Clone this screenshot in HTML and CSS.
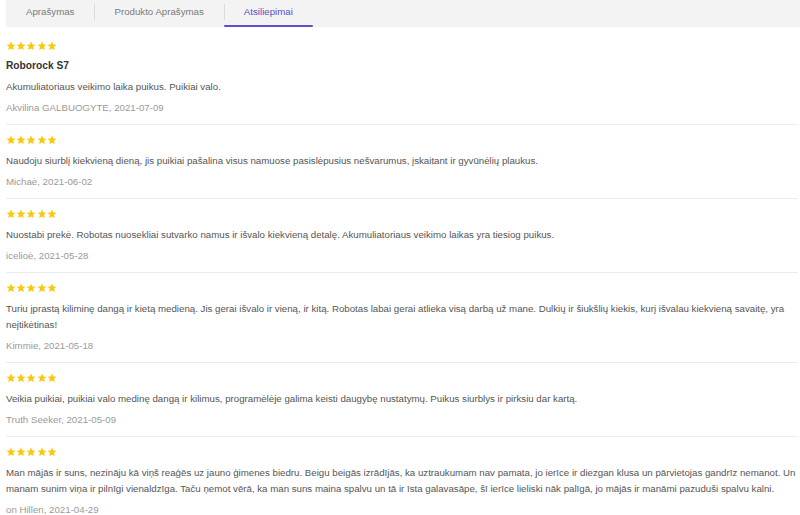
FILE: index.html
```html
<!DOCTYPE html>
<html lang="lt">
<head>
<meta charset="utf-8">
<title>Atsiliepimai</title>
<link rel="stylesheet" href="styles.css">
</head>
<body>
<svg width="0" height="0" class="defs" aria-hidden="true">
  <defs>
    <symbol id="star" viewBox="0 0 24 24">
      <path d="M12 1.2l3.2 7 7.6.7-5.8 5.1 1.8 7.6L12 17.7l-6.8 3.9 1.8-7.6-5.8-5.1 7.6-.7z"/>
    </symbol>
  </defs>
</svg>
<div class="page">
  <nav class="tabs">
    <div class="tab">Aprašymas</div>
    <div class="tab sep">Produkto Aprašymas</div>
    <div class="tab sep active">Atsiliepimai</div>
  </nav>
  <div class="reviews">
    <div class="review">
      <div class="stars"><svg><use href="#star"/></svg><svg><use href="#star"/></svg><svg><use href="#star"/></svg><svg><use href="#star"/></svg><svg><use href="#star"/></svg></div>
      <div class="title">Roborock S7</div>
      <p class="text">Akumuliatoriaus veikimo laika puikus. Puikiai valo.</p>
      <p class="author">Akvilina GALBUOGYTE, 2021-07-09</p>
    </div>
    <div class="review">
      <div class="stars"><svg><use href="#star"/></svg><svg><use href="#star"/></svg><svg><use href="#star"/></svg><svg><use href="#star"/></svg><svg><use href="#star"/></svg></div>
      <p class="text">Naudoju siurblį kiekvieną dieną, jis puikiai pašalina visus namuose pasislėpusius nešvarumus, įskaitant ir gyvūnėlių plaukus.</p>
      <p class="author">Michaė, 2021-06-02</p>
    </div>
    <div class="review">
      <div class="stars"><svg><use href="#star"/></svg><svg><use href="#star"/></svg><svg><use href="#star"/></svg><svg><use href="#star"/></svg><svg><use href="#star"/></svg></div>
      <p class="text">Nuostabi prekė. Robotas nuosekliai sutvarko namus ir išvalo kiekvieną detalę. Akumuliatoriaus veikimo laikas yra tiesiog puikus.</p>
      <p class="author">icelioė, 2021-05-28</p>
    </div>
    <div class="review">
      <div class="stars"><svg><use href="#star"/></svg><svg><use href="#star"/></svg><svg><use href="#star"/></svg><svg><use href="#star"/></svg><svg><use href="#star"/></svg></div>
      <p class="text">Turiu įprastą kiliminę dangą ir kietą medieną. Jis gerai išvalo ir vieną, ir kitą. Robotas labai gerai atlieka visą darbą už mane. Dulkių ir šiukšlių kiekis, kurį išvalau kiekvieną savaitę, yra neįtikėtinas!</p>
      <p class="author">Kimmie, 2021-05-18</p>
    </div>
    <div class="review">
      <div class="stars"><svg><use href="#star"/></svg><svg><use href="#star"/></svg><svg><use href="#star"/></svg><svg><use href="#star"/></svg><svg><use href="#star"/></svg></div>
      <p class="text">Veikia puikiai, puikiai valo medinę dangą ir kilimus, programėlėje galima keisti daugybę nustatymų. Puikus siurblys ir pirksiu dar kartą.</p>
      <p class="author">Truth Seeker, 2021-05-09</p>
    </div>
    <div class="review">
      <div class="stars"><svg><use href="#star"/></svg><svg><use href="#star"/></svg><svg><use href="#star"/></svg><svg><use href="#star"/></svg><svg><use href="#star"/></svg></div>
      <p class="text">Man mājās ir suns, nezināju kā viņš reaģēs uz jauno ģimenes biedru. Beigu beigās izrādījās, ka uztraukumam nav pamata, jo ierīce ir diezgan klusa un pārvietojas gandrīz nemanot. Un manam sunim viņa ir pilnīgi vienaldzīga. Taču ņemot vērā, ka man suns maina spalvu un tā ir īsta galavasāpe, šī ierīce lieliski nāk palīgā, jo mājās ir manāmi pazuduši spalvu kalni.</p>
      <p class="author">on Hillen, 2021-04-29</p>
    </div>
  </div>
</div>
</body>
</html>
```

FILE: styles.css
```css
* { box-sizing: border-box; }
html, body { margin: 0; padding: 0; background: #ffffff; }
body {
  font-family: "Liberation Sans", Arial, sans-serif;
  font-size: 9.7px;
  color: #555555;
  overflow: hidden;
}
.defs { position: absolute; width: 0; height: 0; }
.page { padding-left: 6px; }
.tabs {
  display: flex;
  background: #f3f3f3;
  height: 27px;
}
.tab {
  position: relative;
  padding: 0 20px;
  line-height: 24px;
  color: #7a7a7a;
  white-space: nowrap;
}
.tab.sep::before {
  content: "";
  position: absolute;
  left: 0;
  top: 4px;
  height: 16px;
  width: 1px;
  background: #dcdcdc;
}
.tab.active {
  color: #5e4fc4;
}
.tab.active::after {
  content: "";
  position: absolute;
  left: 0;
  right: 0;
  bottom: 0;
  height: 2.5px;
  background: #5c50cf;
  border-radius: 1px;
}
.reviews { padding-right: 2px; }
.review {
  padding: 10px 0 8px;
  border-bottom: 1px solid #ececec;
}
.review:first-child { padding-top: 14px; }
.review:last-child { border-bottom: none; }
.stars {
  display: flex;
  gap: 0.2px;
  height: 9px;
  margin-bottom: 9px;
}
.stars svg {
  width: 10px;
  height: 10px;
  margin-top: -0.5px;
  fill: #f8c90f;
}
.review:first-child .stars { margin-bottom: 8px; }
.title {
  font-weight: bold;
  font-size: 10.2px;
  line-height: 16px;
  color: #333333;
  margin-bottom: 5px;
}
.text {
  margin: 0;
  line-height: 16px;
  color: #555555;
}
.author {
  margin: 5px 0 0;
  line-height: 16px;
  color: #9a9a9a;
}
```
